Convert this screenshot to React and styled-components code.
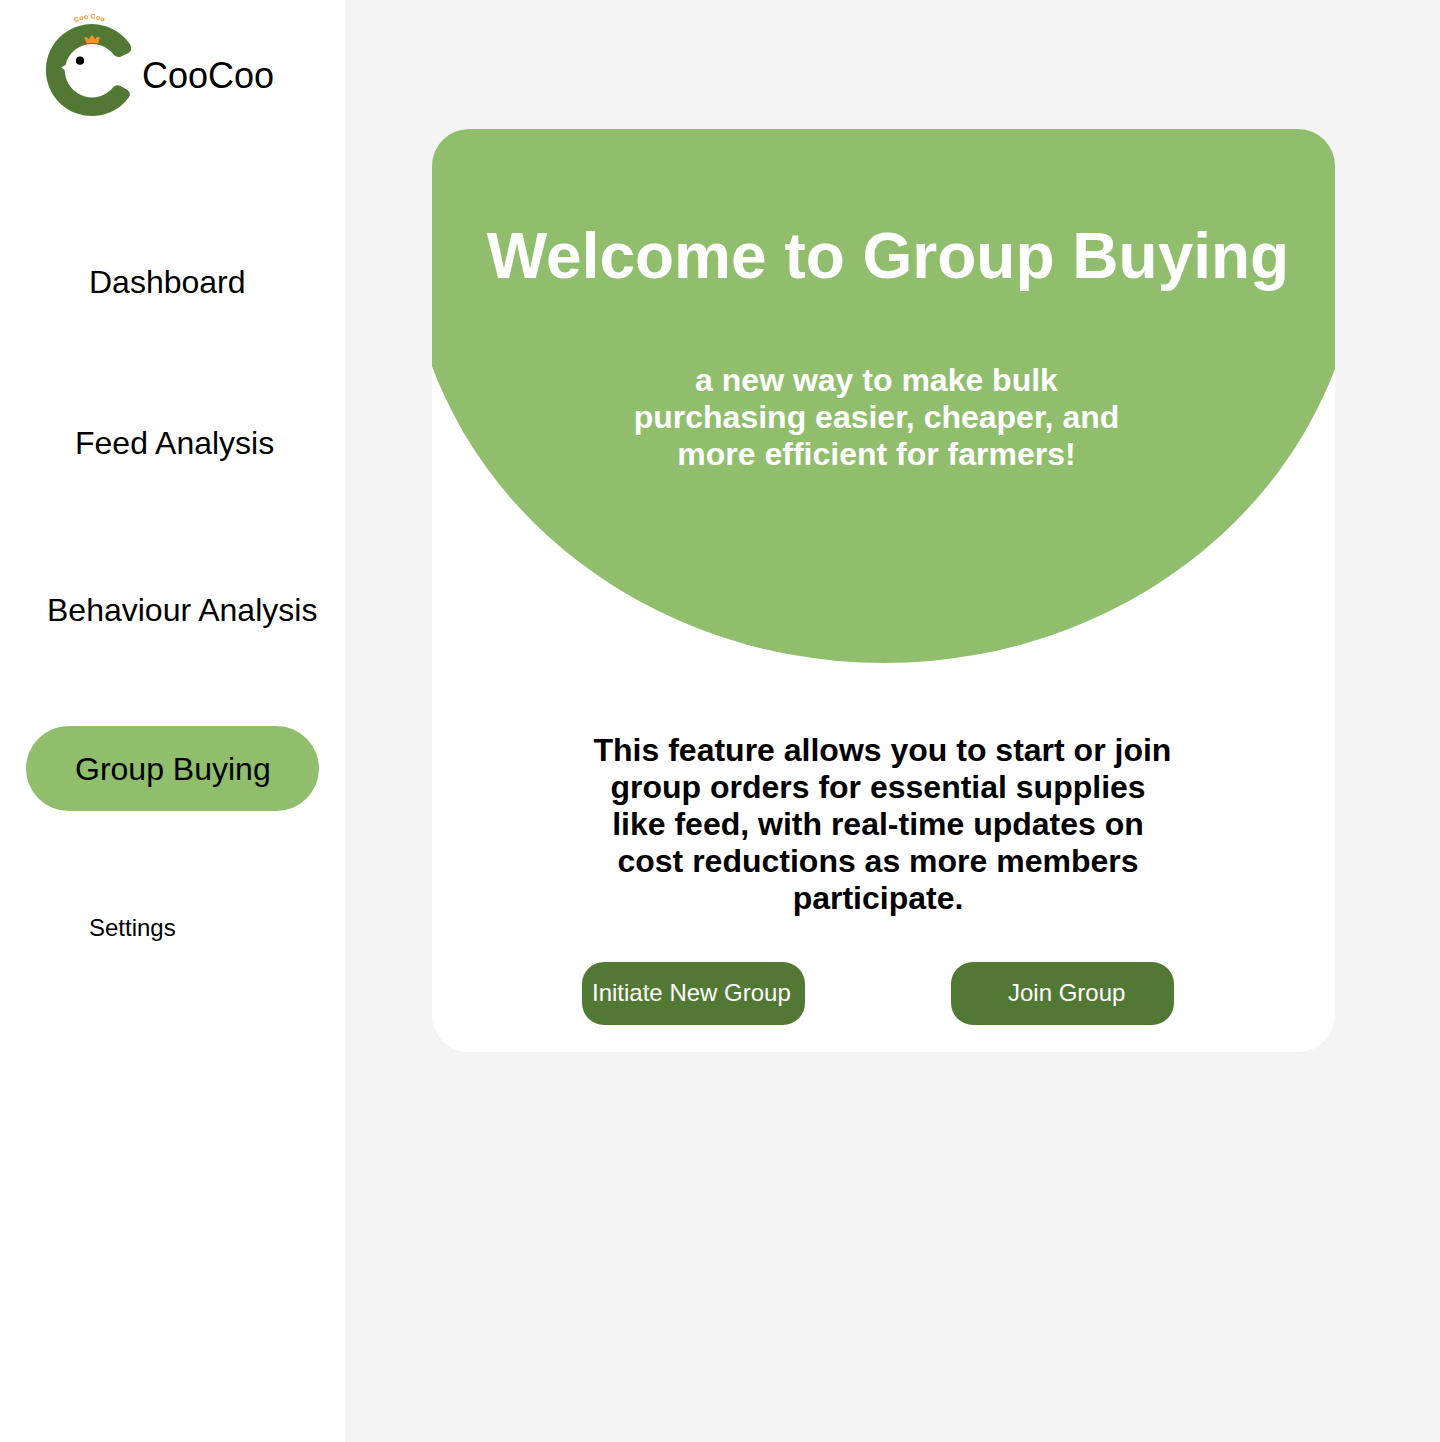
import React from "react";
import styled, { createGlobalStyle } from "styled-components";

const GlobalStyle = createGlobalStyle`
  * { box-sizing: border-box; }
  body { margin: 0; background: #f4f4f4; font-family: "Liberation Sans", Arial, sans-serif; color: #000; }
  h1, p { margin: 0; }
`;

const Page = styled.div`
  display: flex;
  min-height: 1442px;
`;

const Sidebar = styled.aside`
  flex: 0 0 345px;
  background: #fff;
  padding-top: 10px;
`;

const Brand = styled.div`
  display: flex;
  align-items: flex-start;
  height: 110px;
  padding-left: 42px;
`;

const BrandName = styled.span`
  margin: 45px 0 0 8px;
  font-size: 36px;
  line-height: 41px;
`;

const Nav = styled.nav`
  display: flex;
  flex-direction: column;
  padding: 119px 26px 0;
`;

const NavItem = styled.a`
  height: 85px;
  margin-top: ${(p) => p.$gap || 0}px;
  padding: ${(p) => (p.$small ? 24 : 25)}px 0 0 ${(p) => p.$indent}px;
  border-radius: 43px;
  background: ${(p) => (p.$active ? "#90be6d" : "transparent")};
  font-size: ${(p) => (p.$small ? 24 : 32)}px;
  line-height: 37px;
  white-space: nowrap;
`;

const Main = styled.main`
  flex: 1;
  padding: 129px 105px 0 87px;
`;

const Card = styled.section`
  height: 923px;
  border-radius: 37px;
  background: #fff;
  overflow: hidden;
`;

const Hero = styled.header`
  display: flex;
  flex-direction: column;
  align-items: center;
  height: 534px;
  padding-top: 90px;
  background: #90be6d;
  clip-path: ellipse(477.5px 438px at 452px 96px);
  color: #fff;
  text-align: center;
`;

const Title = styled.h1`
  margin-left: 9px;
  font-size: 64px;
  line-height: 74px;
  white-space: nowrap;
`;

const Tagline = styled.p`
  width: 500px;
  margin: 69px 14px 0 0;
  font-size: 32px;
  font-weight: 700;
  line-height: 37px;
`;

const Description = styled.p`
  width: 570px;
  margin: 69px 0 0 161px;
  font-size: 32px;
  font-weight: 700;
  line-height: 37px;
  text-align: center;
`;

const LeadLine = styled.span`
  display: block;
  margin-left: 0.5px;
  white-space: nowrap;
`;

const Actions = styled.div`
  display: flex;
  gap: 146px;
  margin: 45px 0 0 150px;
`;

const ActionButton = styled.button`
  width: 223px;
  height: 63px;
  padding: 0 0 2px ${(p) => p.$indent}px;
  border: 0;
  border-radius: 22px;
  background: #527934;
  color: #fff;
  font: 24px/28px "Liberation Sans", Arial, sans-serif;
  text-align: left;
  white-space: nowrap;
`;

const navItems = [
  { label: "Dashboard", indent: 63 },
  { label: "Feed Analysis", indent: 49, gap: 76 },
  { label: "Behaviour Analysis", indent: 21, gap: 82 },
  { label: "Group Buying", indent: 49, gap: 74, active: true },
  { label: "Settings", indent: 63, gap: 74, small: true },
];

function Logo() {
  return (
    <svg width="92" height="108" viewBox="42 10 92 108" aria-hidden="true">
      <path
        d="M130 44.300A46 46 0 1 0 128.800 97.500Q131.500 93 127.500 90L120.500 86Q116.500 84 113 87.500A27.200 27.200 0 0 1 65 73L64.500 70L61.300 67.500L65.500 65A27.200 27.200 0 0 1 112.500 53.300Q116 58 120.500 56.800L128.500 53Q133 50 130 44.300Z"
        fill="#527934"
      />
      <path
        d="M86.700 43.200L84.200 37.200Q87.300 36 89 39.700Q90.300 35.800 92 35.500Q93.700 35.800 95 39.700Q96.500 36 99.600 37L98.500 43.200Q92.500 42.600 86.700 43.200Z"
        fill="#f7931e"
      />
      <circle cx="80" cy="60.700" r="4.100" fill="#000" />
      <path id="logo-arc" d="M75.300 22.600A30 30 0 0 1 106.500 23.600" fill="none" />
      <text
        fontFamily="Liberation Sans, Arial, sans-serif"
        fontSize="6.800"
        fontWeight="700"
        letterSpacing="0.2"
        fill="#f7931e"
      >
        <textPath href="#logo-arc">Coo Coo</textPath>
      </text>
    </svg>
  );
}

export default function App() {
  return (
    <>
      <GlobalStyle />
      <Page>
        <Sidebar>
          <Brand>
            <Logo />
            <BrandName>CooCoo</BrandName>
          </Brand>
          <Nav>
            {navItems.map((item) => (
              <NavItem key={item.label} $indent={item.indent} $gap={item.gap} $active={item.active} $small={item.small}>
                {item.label}
              </NavItem>
            ))}
          </Nav>
        </Sidebar>
        <Main>
          <Card>
            <Hero>
              <Title>Welcome to Group Buying</Title>
              <Tagline>a new way to make bulk purchasing easier, cheaper, and more efficient for farmers!</Tagline>
            </Hero>
            <Description>
              <LeadLine>This feature allows you to start or join</LeadLine> group orders for essential supplies like
              feed, with real-time updates on cost reductions as more members participate.
            </Description>
            <Actions>
              <ActionButton $indent={10}>Initiate New Group</ActionButton>
              <ActionButton $indent={57}>Join Group</ActionButton>
            </Actions>
          </Card>
        </Main>
      </Page>
    </>
  );
}
